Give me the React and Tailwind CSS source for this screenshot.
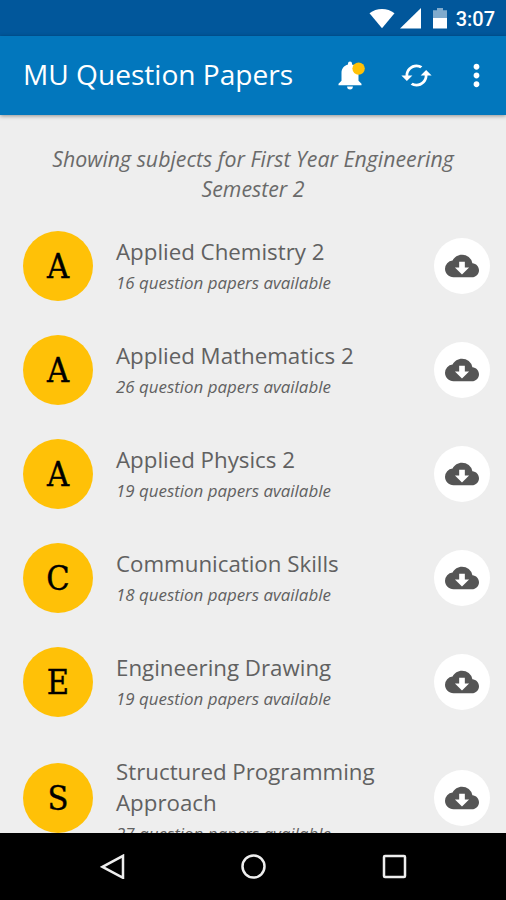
import React from 'react';
import { MdCached, MdCloudDownload, MdMoreVert } from 'react-icons/md';

const subjects = [
  { name: 'Applied Chemistry 2', papers: 16 },
  { name: 'Applied Mathematics 2', papers: 26 },
  { name: 'Applied Physics 2', papers: 19 },
  { name: 'Communication Skills', papers: 18 },
  { name: 'Engineering Drawing', papers: 19 },
  { name: 'Structured Programming Approach', papers: 27 },
];

function StatusBar() {
  return (
    <div className="flex h-9 shrink-0 items-center justify-end bg-[#01579b] pr-[11px] text-white">
      <svg className="mr-[5px] h-[21px] w-[26px]" viewBox="0 0 26 21" fill="currentColor">
        <path d="M0.5 5.3C7.5 -0.6 18.5 -0.6 25.5 5.3L13 20.3z" />
      </svg>
      <svg className="mr-[12px] h-[21px] w-[21px]" viewBox="0 0 21 21" fill="currentColor">
        <path d="M21 0v20.5H0z" />
      </svg>
      <svg className="mr-[9px] h-[21px] w-[14px]" viewBox="0 0 14 21" fill="currentColor">
        <path d="M0 2.2h4V0h6v2.2h4V11H0z" opacity="0.5" />
        <path d="M0 10h14v10.5H0z" />
      </svg>
      <span className="pt-px font-[Roboto] text-[20px] font-medium leading-none">3:07</span>
    </div>
  );
}

function Header() {
  return (
    <div className="z-10 flex h-[79px] shrink-0 items-center bg-[#0277bd] pl-[23px] text-white shadow-[0_1px_4px_rgba(0,0,0,0.4)]">
      <h1 className="flex-1 whitespace-nowrap pb-0.5 text-[28.1px]">MU Question Papers</h1>
      <svg className="mr-[34px] h-[29px] w-[28px]" viewBox="0 0 28 29" fill="currentColor">
        <path d="M0.5 24.3v-1.6l3-3V12c0-4.3 2.4-7.6 6.5-8.6V2.6a2 2 0 0 1 4 0v0.8c4.1 1 6.5 4.3 6.5 8.6v7.7l3 3v1.6z" />
        <path d="M9.1 25.6h5.8a2.9 2.9 0 0 1-5.8 0z" />
        <circle cx="20.6" cy="7.6" r="6.2" fill="#ffc107" />
      </svg>
      <MdCached className="mr-[26px] size-[33px]" />
      <MdMoreVert className="mr-[12px] size-[35px]" />
    </div>
  );
}

function SubjectRow(props) {
  return (
    <div className="flex items-center py-[17px] pl-[23px] pr-4">
      <div className="flex size-[70px] shrink-0 items-center justify-center rounded-full bg-[#ffc107]">
        <span className="font-['DejaVu_Serif_Condensed','DejaVu_Serif',serif] text-[34px] leading-none text-black [-webkit-text-stroke:0.4px_black]">
          {props.name[0]}
        </span>
      </div>
      <div className="ml-[23px] flex-1 self-start pr-10 pt-[5px] text-[#616161]">
        <p className="text-[22.3px] leading-[31px]">{props.name}</p>
        <p className="-mb-[5px] whitespace-nowrap text-[16.9px] italic leading-[31px]">
          {props.papers} question papers available
        </p>
      </div>
      <button className="flex size-14 shrink-0 items-center justify-center rounded-full bg-white text-[#555]">
        <MdCloudDownload className="size-[34px]" />
      </button>
    </div>
  );
}

function NavBar() {
  return (
    <div className="flex h-[67px] shrink-0 items-center justify-center gap-[116px] bg-black">
      <svg className="size-[25px]" viewBox="0 0 25 25" fill="none" stroke="#eee" strokeWidth="2.5">
        <path d="M23 1.8v22L2.5 12.8z" />
      </svg>
      <svg className="size-[25px]" viewBox="0 0 25 25" fill="none" stroke="#eee" strokeWidth="2.5">
        <circle cx="12.5" cy="12.5" r="11" />
      </svg>
      <svg className="size-[25px]" viewBox="0 0 25 25" fill="none" stroke="#eee" strokeWidth="2.5">
        <rect x="2" y="2" width="21" height="21" rx="1" />
      </svg>
    </div>
  );
}

export default function App() {
  return (
    <div className="flex h-[900px] w-[506px] flex-col overflow-hidden bg-[#eee] font-['Open_Sans',sans-serif]">
      <StatusBar />
      <Header />
      <div className="min-h-0 flex-1 overflow-hidden">
        <p className="h-[99px] px-10 pt-[29px] text-center text-[21.3px] italic leading-[30px] text-[#6a6a6a]">
          Showing subjects for First Year Engineering Semester 2
        </p>
        {subjects.map(subject => (
          <SubjectRow key={subject.name} name={subject.name} papers={subject.papers} />
        ))}
      </div>
      <NavBar />
    </div>
  );
}
